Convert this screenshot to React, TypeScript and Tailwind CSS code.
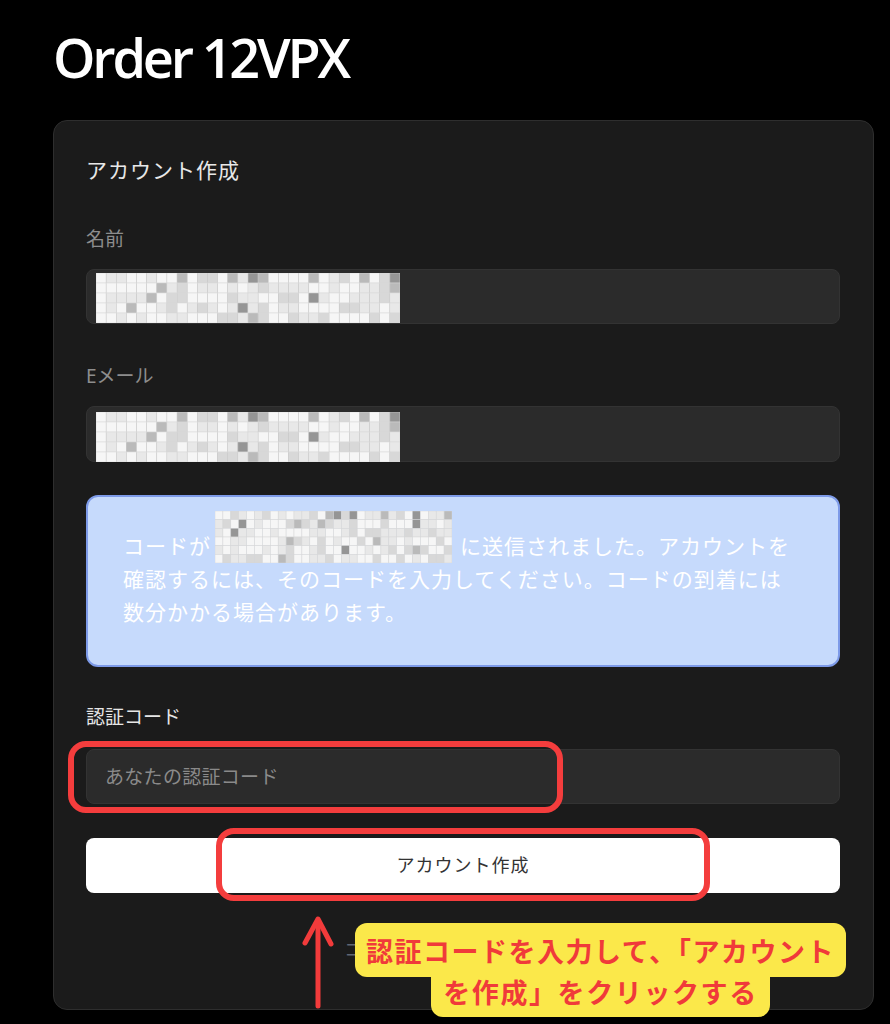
import React from "react";

function Mosaic({ cols, rows, w, h, seed }: { cols: number; rows: number; w: number; h: number; seed: number }) {
  let s = seed;
  const rnd = () => {
    s = (s * 1103515245 + 12345) % 2147483648;
    return s / 2147483648;
  };
  const cw = w / cols;
  const ch = h / rows;
  const rects: React.ReactNode[] = [];
  for (let r = 0; r < rows; r++) {
    for (let c = 0; c < cols; c++) {
      const v = rnd();
      const fill =
        v < 0.035 ? "#959595" : v < 0.09 ? "#bababa" : v < 0.27 ? "#d8d8d8" : v < 0.58 ? "#e8e8e8" : "#f6f6f6";
      rects.push(
        <rect
          key={`${r}-${c}`}
          x={c * cw}
          y={r * ch}
          width={cw}
          height={ch}
          fill={fill}
          stroke="#d6d6d6"
          strokeWidth={0.5}
        />
      );
    }
  }
  return (
    <svg width={w} height={h} viewBox={`0 0 ${w} ${h}`} className="block">
      {rects}
    </svg>
  );
}

export default function App() {
  return (
    <div className="relative w-[890px] h-[1024px] overflow-hidden bg-black font-['Noto_Sans','Noto_Sans_CJK_JP',sans-serif]">
      <div className="pl-[53px] pr-[16px]">
        <h1 className="pt-[30px] text-[54px] leading-[54px] font-semibold tracking-[-3.2px] text-white font-['Open_Sans','Noto_Sans',sans-serif]">
          Order 12VPX
        </h1>
        <div className="mt-[36px] h-[890px] rounded-[14px] border border-[#2e2e2e] bg-[#1b1b1b] pl-[32px] pr-[33px] pt-[34px]">
          <div className="text-[21px] leading-[30px] tracking-[1px] text-[#e8e8e8]">アカウント作成</div>

          <div className="mt-[41px] text-[19px] leading-[26px] text-[#8d8d8d]">名前</div>
          <div className="mt-[17px] flex h-[55px] items-start rounded-[8px] border border-[#333333] bg-[#2b2b2b] pl-[9px] pt-[3px]">
            <Mosaic cols={30} rows={5} w={304} h={50} seed={7} />
          </div>

          <div className="mt-[39px] text-[19px] leading-[26px] text-[#8d8d8d]">Eメール</div>
          <div className="mt-[17px] flex h-[56px] items-start rounded-[8px] border border-[#333333] bg-[#2b2b2b] pl-[9px] pt-[5px]">
            <Mosaic cols={30} rows={5} w={304} h={50} seed={7} />
          </div>

          <div className="mt-[33px] h-[172px] rounded-[12px] border-2 border-[#7d9ae8] bg-[#c6dafc] pl-[35px] pr-[30px] pt-[33px] text-[21px] leading-[33px] tracking-[1px] text-white">
            <div className="whitespace-nowrap">
              コードが
              <span className="ml-[4px] mr-[8px] inline-block align-top mt-[-19px]">
                <Mosaic cols={30} rows={6} w={237} h={52} seed={31} />
              </span>
              に送信されました。アカウントを
            </div>
            <div className="whitespace-nowrap">確認するには、そのコードを入力してください。コードの到着には</div>
            <div className="whitespace-nowrap">数分かかる場合があります。</div>
          </div>

          <div className="mt-[37px] text-[19px] leading-[26px] text-[#e6e6e6]">認証コード</div>
          <input
            readOnly
            placeholder="あなたの認証コード"
            className="mt-[19px] block h-[55px] w-full rounded-[8px] border border-[#333333] bg-[#2b2b2b] pl-[18px] text-[19px] tracking-[0.3px] text-[#e6e6e6] outline-none placeholder:text-[#8a8a8a]"
          />

          <div className="mt-[34px] flex h-[55px] items-center justify-center rounded-[8px] bg-white text-[18px] tracking-[1px] text-[#333333]">
            アカウント作成
          </div>

          <div className="mt-[44px] text-center text-[17px] leading-[26px] text-[#5f6673]">
            コードが届きませんか？再送信
          </div>
        </div>
      </div>

      {/* annotations */}
      <div className="absolute left-[68px] top-[741px] h-[72px] w-[495px] rounded-[18px] border-[6px] border-[#f43d3d]" />
      <div className="absolute left-[216px] top-[828px] h-[73px] w-[494px] rounded-[18px] border-[6px] border-[#f43d3d]" />

      <svg className="absolute left-[300px] top-[912px]" width="36" height="100" viewBox="0 0 36 100">
        <path d="M18 9 L18 94" stroke="#f23b3b" strokeWidth="5" strokeLinecap="round" fill="none" />
        <path d="M5 31 L18 7 L31 32" stroke="#f23b3b" strokeWidth="5" strokeLinecap="round" strokeLinejoin="round" fill="none" />
      </svg>

      <div className="absolute left-[355px] top-[923px] flex w-[491px] flex-col items-center font-['Noto_Sans_CJK_JP',sans-serif] font-bold text-[#f03a3a]">
        <div className="relative z-10 h-[54px] w-full rounded-[12px] bg-[#fbe84a] text-center text-[27px] leading-[56px] tracking-[1.5px]">
          認証コードを入力して、「アカウント
        </div>
        <div className="mt-[-17px] h-[57px] w-[339px] rounded-[12px] bg-[#fbe84a] pt-[6px] text-center text-[27px] leading-[51px] tracking-[1.6px]">
          を作成」をクリックする
        </div>
      </div>
    </div>
  );
}
